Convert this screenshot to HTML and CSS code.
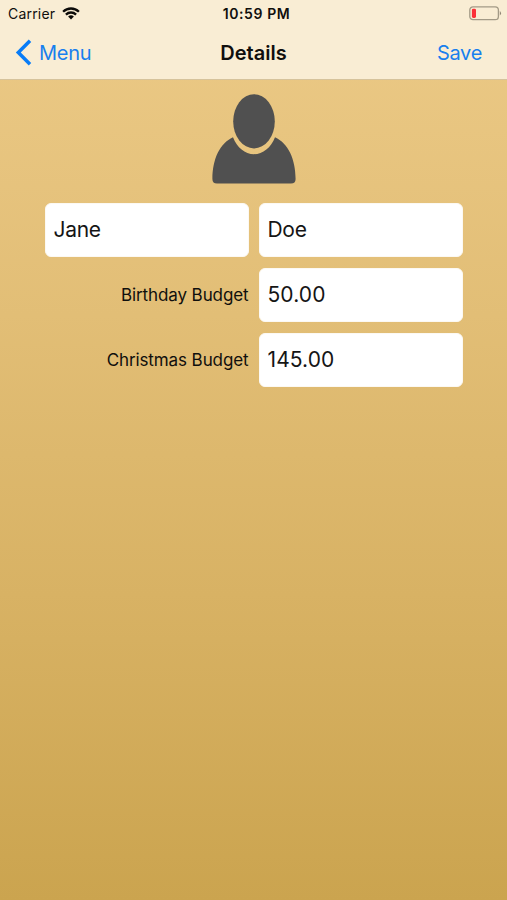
FILE: index.html
```html
<!DOCTYPE html>
<html lang="en">
<head>
<meta charset="utf-8">
<title>Details</title>
<link rel="stylesheet" href="styles.css">
</head>
<body>
<header class="top">
  <div class="status">
    <div class="carrier"><span>Carrier</span>
      <svg class="wifi" width="18" height="13" viewBox="0 0 18 13"><g fill="none" stroke="#0c0b09" stroke-width="2.3"><path d="M1.1 4.8C5.5.4 12.500.4 16.900 4.800"/><path d="M3.900 7.600C6.800 4.800 11.200 4.800 14.100 7.600"/></g><path fill="#0c0b09" d="M6.100 9.500Q9 7.100 11.900 9.500L9 12.400Z"/></svg>
    </div>
    <time class="clock">10:59 PM</time>
    <svg class="battery" width="33" height="15" viewBox="0 0 33 15"><rect x=".8" y=".8" width="28.600" height="12.900" rx="3.200" fill="none" stroke="#a39a86" stroke-width="1.300"/><path d="M30.800 5Q33.200 7.200 30.800 9.500Z" fill="#8f8675"/><rect x="2.900" y="2.700" width="4.100" height="9.200" rx="1.400" fill="#fb3038"/></svg>
  </div>
  <nav class="nav">
    <a class="back"><svg width="17" height="27" viewBox="0 0 17 27"><path d="M15 1.800 3.300 13.500 15 25.200" fill="none" stroke="#087cf7" stroke-width="3.500"/></svg><span>Menu</span></a>
    <h1 class="title">Details</h1>
    <a class="save">Save</a>
  </nav>
</header>
<main class="content">
  <svg class="avatar" width="86" height="92" viewBox="0 0 86 92" fill="#505050"><ellipse cx="43" cy="28.300" rx="20.800" ry="27.100"/><path d="M22 44.200C26 54.500 34 61.200 43 61.200S60 54.500 64 44.200C77 50 84.600 66 84.600 86Q84.600 90.500 80 90.500H6Q1.400 90.500 1.400 86C1.400 66 9 50 22 44.200Z"/></svg>
  <form class="form">
    <input class="field" aria-label="First name" value="Jane">
    <input class="field" aria-label="Last name" value="Doe">
    <label class="label birthday" for="b">Birthday Budget</label>
    <input class="field amount" id="b" value="50.00">
    <label class="label christmas" for="c">Christmas Budget</label>
    <input class="field amount" id="c" value="145.00">
  </form>
</main>
</body>
</html>
```
FILE: styles.css
```css
* { box-sizing: border-box; }
body {
  margin: 0;
  height: 900px;
  overflow: hidden;
  font-family: Inter, "Liberation Sans", sans-serif;
  color: #100f0d;
  background: linear-gradient(#ecca87, #e2be76 35%, #d8b264 66%, #cba44f);
}
.top {
  height: 80px;
  background: #f9edd4;
  border-bottom: 1px solid #d6c39c;
}
.status, .nav {
  display: grid;
  grid-template-columns: 1fr auto 1fr;
  align-items: center;
}
.status { height: 27px; padding: 0 5px 0 8px; }
.carrier { display: flex; align-items: center; gap: 7px; font-size: 14px; letter-spacing: .2px; }
.clock { font-size: 14px; font-weight: 600; letter-spacing: .6px; padding-left: 3px; }
.battery { justify-self: end; }
.nav { height: 50px; padding: 0 25px 0 15px; font-size: 20px; }
.back { display: flex; align-items: center; gap: 7px; color: #187fee; letter-spacing: -.3px; }
.back span, .title, .save { padding-top: 2px; }
.title { margin: 0; padding-left: 10px; font-size: 20px; font-weight: 600; letter-spacing: 0; }
.save { justify-self: end; color: #187fee; letter-spacing: -.3px; }
.content { display: flex; flex-direction: column; align-items: center; padding-top: 13px; }
.form {
  display: grid;
  grid-template-columns: 204px 204px;
  grid-auto-rows: 54px;
  gap: 10.800px 10px;
  margin-top: 18px;
}
.field {
  width: 100%;
  min-width: 0;
  height: 54px;
  padding: 0 8px 2px;
  border: 1px solid #fcf9f3;
  border-radius: 6px;
  background: #fff;
  font: 21px Inter, "Liberation Sans", sans-serif;
  letter-spacing: -.3px;
  color: #151515;
  outline: none;
}
.amount { padding-bottom: 1px; letter-spacing: .1px; }
.label { align-self: center; justify-self: end; font-size: 17px; white-space: nowrap; letter-spacing: -.1px; }
```
